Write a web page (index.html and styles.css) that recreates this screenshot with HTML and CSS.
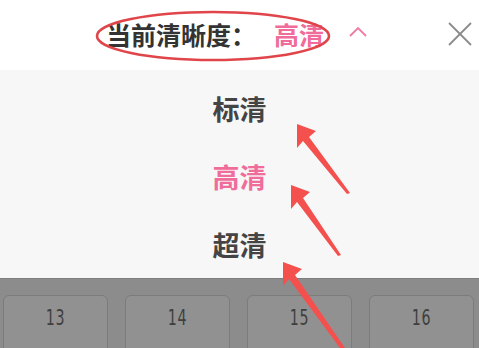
FILE: index.html
```html
<!DOCTYPE html>
<html lang="zh-CN">

<head>
    <meta charset="UTF-8">
    <meta name="viewport" content="width=device-width, initial-scale=1.0">
    <title>清晰度</title>
    <link rel="stylesheet" href="styles.css">
</head>

<body>
    <div class="page">
        <div class="top-bar">
            <div class="current">
                <span class="label">当前清晰度：</span>
                <span class="value">高清</span>
                <svg class="chevron" width="20" height="12" viewBox="0 0 20 12">
                    <polyline points="2,10 10,2 18,10" fill="none" stroke="#f07aa3" stroke-width="1.8" />
                </svg>
            </div>
            <svg class="close" width="26" height="26" viewBox="0 0 26 26">
                <line x1="2" y1="2" x2="24" y2="24" stroke="#8a8a8a" stroke-width="1.8" />
                <line x1="24" y1="2" x2="2" y2="24" stroke="#8a8a8a" stroke-width="1.8" />
            </svg>
        </div>

        <div class="menu">
            <div class="menu-item">标清</div>
            <div class="menu-item active">高清</div>
            <div class="menu-item">超清</div>
        </div>

        <div class="episodes">
            <div class="ep"><span>13</span></div>
            <div class="ep"><span>14</span></div>
            <div class="ep"><span>15</span></div>
            <div class="ep"><span>16</span></div>
        </div>

        <!-- annotation marks drawn over the screenshot -->
        <svg class="marks" width="479" height="348" viewBox="0 0 479 348">
            <ellipse cx="213" cy="36" rx="116" ry="24" fill="none" stroke="#e0454a" stroke-width="2.6" />
            <g fill="#f4514e">
                <polygon points="297,124 316,131 309,137 350,193 347,194 303,141 297,148" />
                <polygon points="291,185 310,192 303,198 341,255 338,256 297,202 291,209" />
                <polygon points="283,262 302,269 295,275 345,348 340,348 289,279 283,286" />
            </g>
        </svg>
    </div>
</body>

</html>
```

FILE: styles.css
```css
* {
    box-sizing: border-box;
}

body {
    margin: 0;
    font-family: "Noto Sans CJK SC", "Noto Sans", sans-serif;
}

.page {
    width: 479px;
    height: 348px;
    position: relative;
    overflow: hidden;
    background: #fff;
}

.top-bar {
    height: 70px;
    display: flex;
    align-items: center;
    background: #fff;
    padding-left: 106px;
    padding-bottom: 2px;
}

.current {
    display: flex;
    align-items: center;
}

.label {
    font-size: 25px;
    font-weight: bold;
    color: #333;
}

.value {
    font-size: 25px;
    font-weight: bold;
    color: #f06c9b;
    margin-left: 18px;
}

.chevron {
    margin-left: 24px;
    margin-top: -4px;
}

.close {
    margin-left: auto;
    margin-right: 6px;
}

.menu {
    height: 208px;
    background: #f7f7f7;
    display: flex;
    flex-direction: column;
    align-items: center;
    padding-top: 20px;
    gap: 30px;
}

.menu-item {
    font-size: 27px;
    font-weight: bold;
    color: #444;
    line-height: 38px;
    height: 38px;
}

.menu-item.active {
    color: #f06c9b;
}

.episodes {
    height: 70px;
    background: #8c8c8c;
    border-top: 1px solid #7e7e7e;
    display: flex;
    gap: 17px;
    padding: 16px 0 0 3px;
}

.ep {
    width: 105px;
    height: 60px;
    background: #919191;
    border: 1px solid #7c7c7c;
    border-radius: 6px;
    display: flex;
    justify-content: center;
    padding-top: 9px;
    font-family: "DejaVu Sans Condensed", "DejaVu Sans", sans-serif;
    font-size: 22px;
    letter-spacing: 1px;
    color: #3f3f3f;
}

.ep span {
    display: inline-block;
    transform: scaleX(0.72);
}

.marks {
    position: absolute;
    left: 0;
    top: 0;
    pointer-events: none;
}
```
